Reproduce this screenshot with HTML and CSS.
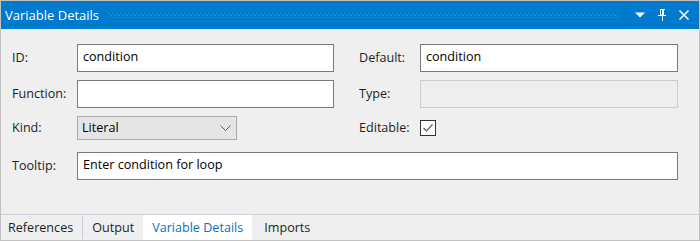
FILE: index.html
```html
<!DOCTYPE html>
<html>
<head>
<meta charset="utf-8">
<link rel="stylesheet" href="styles.css">
</head>
<body>
<div class="window">
  <div class="titlebar">
    <span class="title">Variable Details</span>
    <span class="grip"></span>
    <span class="tbtn">
      <svg width="12" height="12" viewBox="0 0 12 12"><path d="M1 3.5h10L6 8.5z" fill="#fff"/></svg>
    </span>
    <span class="tbtn">
      <svg width="12" height="14" viewBox="0 0 12 14"><path d="M3.5 1.5h5M4.5 1.5v6M7.5 1.5v6M6.5 1.5v6M2 7.5h8M6 7.5v5" stroke="#fff" stroke-width="1" fill="none" shape-rendering="crispEdges"/></svg>
    </span>
    <span class="tbtn">
      <svg width="12" height="12" viewBox="0 0 12 12"><path d="M1.5 1.5l9 9M10.5 1.5l-9 9" stroke="#fff" stroke-width="1.5" fill="none"/></svg>
    </span>
  </div>
  <div class="form">
    <label class="lbl">ID:</label>
    <div class="field">condition</div>
    <label class="lbl lbl2">Default:</label>
    <div class="field">condition</div>

    <label class="lbl">Function:</label>
    <div class="field"></div>
    <label class="lbl lbl2">Type:</label>
    <div class="field disabled"></div>

    <label class="lbl short">Kind:</label>
    <div class="selectcell">
      <div class="select">
        <span>Literal</span>
        <svg width="11" height="6" viewBox="0 0 11 6"><path d="M0.5 0.5l5 5 5-5" stroke="#606060" stroke-width="1" fill="none"/></svg>
      </div>
    </div>
    <label class="lbl lbl2 short">Editable:</label>
    <div class="checkcell">
      <span class="checkbox">
        <svg width="14" height="14" viewBox="0 0 14 14"><path d="M2.5 7l3 3 6-6.5" stroke="#555" stroke-width="1.2" fill="none"/></svg>
      </span>
    </div>

    <label class="lbl">Tooltip:</label>
    <div class="field wide">Enter condition for loop</div>
  </div>
  <div class="tabs">
    <span class="tab first">References</span>
    <span class="sep"></span>
    <span class="tab">Output</span>
    <span class="tab active">Variable Details</span>
    <span class="tab last">Imports</span>
  </div>
</div>
</body>
</html>
```
FILE: styles.css
```css
html, body {
  margin: 0;
  padding: 0;
  background: #efefef;
}
body {
  font-family: "Open Sans", "Noto Sans", "DejaVu Sans", sans-serif;
  font-size: 12.6px;
  color: #1e1e1e;
}
.window {
  width: 700px;
  height: 241px;
  box-sizing: border-box;
  border: 1px solid #c2c2c2;
  display: flex;
  flex-direction: column;
  background: #efefef;
}
.titlebar {
  height: 28px;
  background: #007acc;
  color: #fff;
  display: flex;
  align-items: center;
  padding-left: 4px;
  flex: none;
}
.title {
  font-size: 13px;
  line-height: 28px;
  padding-bottom: 1px;
}
.grip {
  flex: 1;
  height: 5px;
  margin: 0 10px 0 10px;
  background-image:
    radial-gradient(circle at 0.5px 0.5px, #3b98da 0.7px, transparent 0.8px),
    radial-gradient(circle at 2.5px 2.5px, #3b98da 0.7px, transparent 0.8px);
  background-size: 4px 4px;
}
.tbtn {
  width: 22px;
  height: 20px;
  display: flex;
  align-items: center;
  justify-content: center;
}
.tbtn:last-child {
  margin-right: 4px;
}
.form {
  flex: 1;
  display: grid;
  grid-template-columns: 65px 257px 86px 1fr;
  grid-template-rows: 28px 28px 28px 28px;
  row-gap: 8px;
  padding: 15px 21px 0 11px;
  align-content: start;
}
.lbl {
  display: flex;
  align-items: center;
  height: 28px;
  padding-bottom: 2px;
  box-sizing: border-box;
}
.lbl.short {
  height: 24px;
}
.lbl2 {
  padding-left: 25px;
}
.field {
  box-sizing: border-box;
  height: 28px;
  border: 1px solid #7a7a7a;
  background: #fff;
  padding: 0 0 0 5px;
  line-height: 23px;
  color: #000;
}
.field.disabled {
  border-color: #cccccc;
  background: #eeeeee;
}
.field.wide {
  grid-column: 2 / 5;
}
.selectcell {
  display: flex;
  align-items: flex-start;
}
.select {
  box-sizing: border-box;
  width: 160px;
  height: 24px;
  border: 1px solid #adadad;
  background: #e5e5e5;
  display: flex;
  align-items: center;
  justify-content: space-between;
  padding: 0 5px 1px 4px;
  color: #000;
}
.checkcell {
  height: 24px;
  display: flex;
  align-items: center;
}
.checkbox {
  box-sizing: border-box;
  width: 16px;
  height: 16px;
  border: 1px solid #333;
  background: #fff;
  display: flex;
  align-items: center;
  justify-content: center;
}
.tabs {
  flex: none;
  height: 25px;
  border-top: 1px solid #cfd0dc;
  display: flex;
  align-items: stretch;
}
.tab {
  display: flex;
  align-items: center;
  padding: 0 9px 1px 9px;
  color: #1e1e1e;
}
.tab.first {
  padding-left: 7px;
  padding-right: 9px;
}
.tab.active {
  background: #fff;
  color: #0e70c0;
}
.tab.last {
  padding-left: 12px;
}
.sep {
  width: 1px;
  background: #cccedb;
  margin: 1px 0 1px;
}
```
